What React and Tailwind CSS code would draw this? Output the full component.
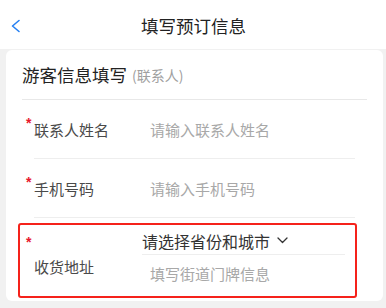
import React from "react";

const font = { fontFamily: '"Noto Sans CJK SC", "Noto Sans", sans-serif' };

function Row({ label, placeholder }) {
  return (
    <div className="flex h-[58px] items-center pl-[20px]">
      <div className="flex w-[124px] items-start">
        <span className="mt-[-6px] w-[8px] text-[14px] leading-none text-[#e8182c] font-['Liberation_Sans',sans-serif] font-bold">*</span>
        <span className="text-[15px] leading-none text-[#4a4a4a]">{label}</span>
      </div>
      <span className="text-[15px] leading-none text-[#a8a8a8]">{placeholder}</span>
    </div>
  );
}

export default function App() {
  return (
    <div className="h-[308px] w-[386px] overflow-hidden bg-[#f1f1f1] font-['Noto_Sans_CJK_SC',sans-serif]" style={font}>
      <div className="relative flex h-[49px] items-center justify-center bg-white">
        <svg className="absolute left-[10px] top-[19px]" width="11" height="14" viewBox="0 0 11 14" fill="none">
          <path d="M9 1.5 L2.5 7 L9 12.5" stroke="#2680f2" strokeWidth="1.6" strokeLinecap="round" strokeLinejoin="round" />
        </svg>
        <span className="ml-[1px] mt-[3px] text-[17.5px] text-[#222]">填写预订信息</span>
      </div>
      <div className="ml-[6px] mr-[3px] mt-[1px] rounded-[6px] bg-white pb-[3px]">
        <div className="mx-[16px] flex h-[50px] items-center border-b border-[#e8e8e8]">
          <span className="text-[17.5px] leading-none text-[#222]">游客信息填写</span>
          <span className="ml-[5px] mt-[1px] text-[14px] leading-none text-[#a0a0a0]">(联系人)</span>
        </div>
        <Row label="联系人姓名" placeholder="请输入联系人姓名" />
        <div className="mx-[28px] h-px bg-[#eeeeee]" />
        <Row label="手机号码" placeholder="请输入手机号码" />
        <div className="mx-[28px] h-px bg-[#eeeeee]" />
        <div className="ml-[12px] mt-[5px] flex h-[75px] w-[339px] rounded-[3px] border-2 border-[#f5221b]">
          <div className="flex w-[122px] flex-col pl-[6px] pt-[10px]">
            <span className="h-[14px] text-[14px] leading-none text-[#e8182c] font-['Liberation_Sans',sans-serif] font-bold">*</span>
            <span className="ml-[8px] mt-[10px] text-[15px] leading-none text-[#4a4a4a]">收货地址</span>
          </div>
          <div className="flex w-[203px] flex-col">
            <div className="flex h-[29px] items-center pt-[2px]">
              <span className="text-[16px] leading-none text-[#333]">请选择省份和城市</span>
              <svg className="ml-[7px]" width="11" height="7" viewBox="0 0 11 7" fill="none">
                <path d="M1 1 L5.5 5.5 L10 1" stroke="#333" strokeWidth="1.3" strokeLinecap="round" strokeLinejoin="round" />
              </svg>
            </div>
            <div className="h-px bg-[#eeeeee]" />
            <div className="flex h-[36px] items-center pl-[8px]">
              <span className="text-[15px] leading-none text-[#a8a8a8]">填写街道门牌信息</span>
            </div>
          </div>
        </div>
      </div>
    </div>
  );
}
